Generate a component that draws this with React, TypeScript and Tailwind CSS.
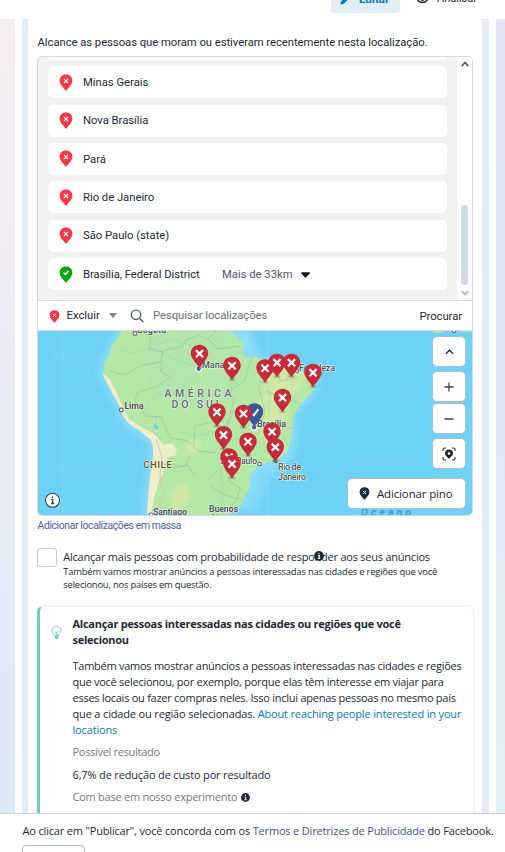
import React from "react";

const excluded = ["Minas Gerais", "Nova Brasília", "Pará", "Rio de Janeiro", "São Paulo (state)"];

const mapPins: [number, number][] = [
  [199.5, 353.5], [232, 365.5], [277, 362.5], [291.5, 362.5], [265, 368], [313, 372.5], [282.5, 397.5],
  [217, 412], [243.5, 413.5], [223.5, 434.8], [272, 431.5], [248, 441.5], [275.3, 447], [229, 457], [232, 463.8],
];

function Pin({ color, check, className }: { color: string; check?: boolean; className: string }) {
  return (
    <svg viewBox="0 0 14 17" className={className} aria-hidden="true">
      <path d="M7 .4C3.2.4.6 3 .6 6.500c0 4 4 7.200 5.500 9.500.5.700 1.300.700 1.800 0 1.500-2.300 5.500-5.500 5.500-9.500C13.400 3 10.800.4 7 .4Z" fill={color} />
      {check ? (
        <path d="m4.600 6.800 1.700 1.700 3.200-3.400" fill="none" stroke="#fff" strokeWidth="1.400" />
      ) : (
        <path d="m4.900 4.900 4.200 4.200m0-4.200L4.900 9.100" fill="none" stroke="#fff" strokeWidth="1.300" />
      )}
    </svg>
  );
}

function InfoDot({ className }: { className: string }) {
  return (
    <svg viewBox="0 0 10 10" className={className} aria-hidden="true">
      <circle cx="5" cy="5" r="4.900" fill="#1c2b33" />
      <path d="M5 2v1.300M4 4.600h1.200v2.600M3.900 7.400h2.300" stroke="#fff" strokeWidth="1.100" fill="none" />
    </svg>
  );
}

function MapMarker({ x, y, blue }: { x: number; y: number; blue?: boolean }) {
  return (
    <g transform={`translate(${x} ${y})`}>
      <ellipse cx="0" cy="14" rx="3.500" ry="1.500" fill="#35543a" opacity=".25" />
      <path d="M0-8.700c-5 0-8.700 3.700-8.700 8.500C-8.700 5-3.500 9 0 15 3.500 9 8.700 5 8.700-.2c0-4.800-3.700-8.500-8.700-8.500Z" fill={blue ? "#3b5998" : "#c92a37"} />
      {blue ? (
        <path d="m-1.500 2 1 1.200L4-3" stroke="#fff" strokeWidth="2" fill="none" />
      ) : (
        <path d="m-3.600-3.400 7.200 7.200m0-7.200-7.200 7.200" stroke="#fff" strokeWidth="2.200" fill="none" />
      )}
    </g>
  );
}

const land =
  "M121 331L118 338 111.700 345 109 355 104.500 362 103 375 108 385 115 398 120 407 124 417 128 423 140 431 151 440 153 446 153 458 150 478 148 498 147 516H228L232 510 243 503 245 495 250 488 250 475 257 467 266 463 276 460 284 456 288 450 291 440 293 425 294 415 300 405 311 394 315 386 314 378 306 373 298 370 288 364 277 363 264 360 256 357 248 358 243 355 244 345 237 337 230 331Z";

function MapArt() {
  return (
    <svg viewBox="38 331 434 184" className="block h-[184px] w-[434px]">
      <defs>
        <filter id="soft"><feGaussianBlur stdDeviation="3" /></filter>
        <filter id="tint"><feGaussianBlur stdDeviation="2" /></filter>
        <clipPath id="landClip"><path d={land} /></clipPath>
      </defs>
      <rect x="38" y="331" width="434" height="184" fill="#6ed1f6" />
      <path d={land} fill="none" stroke="#8adcf9" strokeWidth="8" filter="url(#soft)" />
      <path d="M230 331h20l10 24h-16Z" fill="#8fdffb" filter="url(#soft)" />
      <path d="M288 430q12 8 8 25l-25 22-15 35h-15l8-40Z" fill="#8fdffb" opacity=".6" filter="url(#soft)" />
      <g stroke="#86dbf8" strokeWidth="1" fill="none" opacity=".4">
        <path d="M50 352l9 7m-9-1 35 2M40 474l25-4 38 1M90 445l14-7 20-4M70 400l25-5M42 415l18 6M310 440l22 7M300 490l45-6M400 400l15-4M405 480l20 5M440 502l20 10" />
      </g>
      <path d="M62.500 331V515M267.500 331V515" stroke="#8bd8f5" strokeWidth=".7" />
      <path d="M431 331q8 4 14 0zM459 331q6 2 12 1v-1z" fill="#b9e5a2" />
      <path d={land} fill="#b5e8a5" />
      <g clipPath="url(#landClip)">
        <path d="M150 331h90v40l-30 40-50-15-20-30Z" fill="#b2e6aa" filter="url(#soft)" />
        <g filter="url(#tint)" fill="#cfe9a5">
          <path d="M262 372l30-7 15 9-10 18-18 6-18-8Z" />
          <path d="M260 396l22-2 7 15-10 25-18 6-9-20ZM189 440l10-1 0 10-8 7-5-7ZM174 489l13-5 4 13-13 13h-10Z" />
        </g>
        <path d="M102 373l8 6 7 15 7 15 5 10 13 8 14 8 7 10 9-2 5 7-2 6-8 1-2 12-6 12-5 17-3 17H146V440L130 427 116 407Z" fill="#f0edc9" />
        <path d="M156 439l6 18-2 20 3 17-7 21" stroke="#cdd1b4" strokeWidth="1.200" fill="none" />
        <g fill="none" stroke="#86d4d1" strokeWidth=".8" opacity=".6">
          <path d="M120 350l15 3 18-5 20 10 26 10 20-4 14-5 15-12M142 414l8-14 14-9 19-4 14-15M233 375l-2 17 3 18-8 20M267 355l-4 20 7 18-2 20M155 345l17-6 20 7M226 447l-5 23 2 30-10 15M180 430l15 7 20-5M245 433l-20 14M213 338l10 12" />
        </g>
        <g fill="none" stroke="#a3c8a8" strokeWidth=".8">
          <path d="M145 331l6 8-2 10 14 3-3 10-20 4-15 9-15-4M162 350l-1 22 10 5-15 10-18 5-3 9 11 15 15 1 9 21 18 3 10 10 20 2 9 8 1 20 12 7-3 12-14 13-10 17M157 417l-4 15 8 8M184 341l15-6 9 4 8-8M208 339l9 10 22-3M165 350l17-3 5-8M217 421l-22 5-1 19M208 479l9-8M190 454l-5 12-21-2M163 464l12 4 13-3 7 11M210 486l15 9 18 5M252 357l-8 25-21 12M264 361l-5 28 6 22-7 24M277 364l3 17 18-3M291 365l-4 15M266 391l17 8 18 4M258 418l17 9 17 1M235 397l-10 36M238 465l-13-4" />
        </g>
        <path d="M154 425l4 4" stroke="#6ccdf1" strokeWidth="2.500" fill="none" />
      </g>
      <g fill="#fff" stroke="#59616b" strokeWidth="1.100">
        <circle cx="135" cy="333.500" r="1.900" /><circle cx="121.300" cy="410" r="1.900" /><circle cx="151" cy="515" r="2" />
        <circle cx="297" cy="371" r="1.500" /><circle cx="259.500" cy="464" r="1.800" /><circle cx="275.500" cy="461" r="1.600" /><circle cx="454" cy="331" r="1.600" />
      </g>
      <g fontFamily="Roboto, sans-serif" fill="#505962" stroke="#e5f2df" strokeWidth="1.200" paintOrder="stroke" fontSize="9" fontWeight="500">
        <text x="137" y="332.500" textLength="29" fontWeight="700">Bogota</text>
        <text x="202" y="368" textLength="32">Manaus</text>
        <text x="124.500" y="409" textLength="19" fontWeight="700">Lima</text>
        <text x="299" y="370.500" textLength="36">Fortaleza</text>
        <text x="257" y="426.500" textLength="29" fontWeight="700">Brasília</text>
        <text x="220" y="463.500" textLength="37">São Paulo</text>
        <text x="278" y="470" textLength="23">Rio de</text>
        <text x="278" y="479.500" textLength="28">Janeiro</text>
        <text x="153" y="514.500" textLength="34" fontWeight="700">Santiago</text>
        <text x="209" y="511.500" textLength="29" fontWeight="700">Buenos</text>
        <text x="210" y="521" textLength="22" fontWeight="700">Aires</text>
        <text x="164.500" y="396.500" textLength="67" fontSize="10.500" fill="#626d78">AMÉRICA</text>
        <text x="171.500" y="408" textLength="50" fontSize="10.500" fill="#626d78">DO SUL</text>
        <text x="143.500" y="467.500" textLength="28" fill="#74462f">CHILE</text>
      </g>
      <text x="361" y="516" textLength="50" fontFamily="Roboto, sans-serif" fontSize="10" fontStyle="italic" fontWeight="700" fill="#27a5d5">Oceano</text>
      <g fill="#4669aa" stroke="#fff" strokeWidth="1.300"><circle cx="198.700" cy="369" r="2.800" /><circle cx="254" cy="427.500" r="2.800" /></g>
      <MapMarker x={254.500} y={412} blue />
      {mapPins.map(([x, y]) => <MapMarker key={`${x}-${y}`} x={x} y={y} />)}
      <g transform="translate(52.500 500.300)"><circle r="7" fill="#fff" stroke="#344854" strokeWidth="1.100" /><path d="M0-3.800v1.600M-1.300-.7H.2v3.600M-1.500 3.200h3.200" stroke="#344854" strokeWidth="1.300" fill="none" /></g>
    </svg>
  );
}

const mapButton = "flex w-[34px] items-center justify-center rounded-[5px] border border-[#aebdca] bg-white";

export default function App() {
  return (
    <div className="flex h-[852px] w-[505px] flex-col overflow-hidden bg-white font-[Roboto,sans-serif] text-[#1c2b33]">
      <header className="flex h-[19px] shrink-0 pl-[331px]">
        <div className="flex h-[13px] w-[69px] rounded-b-[4px] bg-[#e1edf7] pl-[9px] text-[#0a78be]">
          <svg viewBox="0 0 10 10" className="-mt-[5px] h-[10px] w-[10px] shrink-0"><path d="M.5 9.500 1 6.500 7 .5l2.500 2.500-6 6Z" fill="currentColor" /></svg>
          <span className="-mt-[8px] ml-[9px] text-[11.5px] leading-[14px] font-bold">Editar</span>
        </div>
        <div className="flex h-[8px] pl-[16px]">
          <svg viewBox="0 0 14 10" className="-mt-[6px] h-[10px] w-[13px]"><path d="M1 5c3-5 9-5 12 0-3 5-9 5-12 0Z" fill="none" stroke="#1c2b33" strokeWidth="1.500" /><circle cx="7" cy="5" r="2" /></svg>
          <span className="-mt-[8px] ml-[8px] text-[11px] leading-[14px]">Analisar</span>
        </div>
      </header>

      <main className="flex h-[794px] shrink-0 overflow-hidden">
        <div className="w-[15px] shrink-0 bg-linear-to-b from-[#f5eeef] via-[#e9e9f5] via-50% to-[#dcebf8]" />
        <div className="mx-[7px] flex w-[467px] shrink-0 bg-[#e1edf6] pr-[7px] pl-[6px]">
          <section className="w-[454px] rounded-t-[3px] bg-white pl-[9px]">
            <p className="h-[37px] pt-[15px] pl-[0.5px] text-[11.3px] leading-[17px] tracking-[-0.05px] whitespace-nowrap">Alcance as pessoas que moram ou estiveram recentemente nesta localização.</p>

            <div className="h-[460px] w-[436px] overflow-hidden rounded-[5px] border border-[#d5d8df]">
              <div className="flex h-[243px] bg-[#f1f1f1]">
                <div className="w-[419px] pl-[10px]">
                  <div className="h-[3px] w-[399px] rounded-b-[5px] bg-white" />
                  <div className="mt-[6.2px] flex flex-col gap-[6.4px]">
                    {excluded.map((name) => (
                      <div key={name} className="flex h-8 w-[399px] items-center rounded-[5px] bg-white pl-[11px] text-[11.3px]">
                        <Pin color="#fa3743" className="h-[17px] w-[14px]" />
                        <span className="ml-[10px] pt-[2.4px] tracking-[-0.03px]">{name}</span>
                      </div>
                    ))}
                    <div className="flex h-8 w-[399px] items-center rounded-[5px] bg-white pl-[11px] text-[11.3px]">
                      <Pin color="#06a60c" check className="h-[17px] w-[14px]" />
                      <span className="ml-[10px] w-[139px] pt-[3px] tracking-[-0.04px]">Brasília, Federal District</span>
                      <span className="w-[79px] pt-[3px] tracking-[-0.03px] text-[#465a69]">Mais de 33km</span>
                      <svg viewBox="0 0 10 6" className="mt-[1px] h-[6px] w-[9px]"><path d="M.5 0h9L10 1 5.500 5.700h-1L0 1Z" fill="#111820" /></svg>
                    </div>
                  </div>
                </div>
                <div className="flex w-[15px] flex-col items-center bg-white">
                  <svg viewBox="0 0 8 6" className="mt-[4px] h-[6px] w-[8px]"><path d="m.8 5 3.200-3.500L7.200 5" fill="none" stroke="#555" strokeWidth="1.800" /></svg>
                  <div className="mt-[138px] h-[80px] w-[7px] rounded-full bg-[#d0dce4]" />
                  <svg viewBox="0 0 8 6" className="mt-[5px] h-[6px] w-[8px]"><path d="m.8 1 3.200 3.500L7.200 1" fill="none" stroke="#b4b4b4" strokeWidth="1.800" /></svg>
                </div>
              </div>

              <div className="flex h-[31px] items-center border-y border-[#d8dae0] pr-[10px] pl-[11px] text-[11.3px]">
                <Pin color="#fa3743" className="mt-[2px] h-[13px] w-[11px]" />
                <span className="ml-[6px] w-[43px] pt-[1px] pl-[0.5px]">Excluir</span>
                <svg viewBox="0 0 8 5" className="h-[5px] w-[8px]"><path d="M.5 0h7v1L4 5 .5 1Z" fill="#7d8791" /></svg>
                <svg viewBox="0 0 14 14" className="ml-[13px] h-[14px] w-[14px]"><circle cx="6" cy="5.800" r="4.700" fill="none" stroke="#536069" strokeWidth="1.400" /><path d="m9.500 9.300 3.700 3.700" stroke="#536069" strokeWidth="1.500" /></svg>
                <span className="ml-[9px] pt-[1px] tracking-[-0.06px] text-[#65717b]">Pesquisar localizações</span>
                <span className="mt-[3px] ml-auto tracking-[-0.05px] text-[#1c2b33]">Procurar</span>
              </div>

              <div className="relative h-[184px] overflow-hidden rounded-b-[4px]">
                <MapArt />
                <div className="absolute top-[5px] right-[6px] flex flex-col items-end">
                  <button className={mapButton + " h-[31px]"}><svg viewBox="0 0 10 6" className="h-[6px] w-[9px]"><path d="m1 5 4-4 4 4" fill="none" stroke="#1c2b33" strokeWidth="1.500" /></svg></button>
                  <button className={mapButton + " mt-[4px] h-[31px]"}><svg viewBox="0 0 10 10" className="h-[10px] w-[10px]"><path d="M5 .5v9M.5 5h9" stroke="#354650" strokeWidth="1.300" /></svg></button>
                  <button className={mapButton + " mt-[1px] h-[31px]"}><svg viewBox="0 0 10 10" className="h-[10px] w-[10px]"><path d="M.5 5h9" stroke="#354650" strokeWidth="1.300" /></svg></button>
                  <button className={mapButton + " mt-[4px] h-[31px]"}><svg viewBox="0 0 14 14" className="h-[14px] w-[14px]"><path d="M1 4V2.500Q1 1 2.500 1H4M10 1h1.500Q13 1 13 2.500V4M13 10v1.500q0 1.500-1.500 1.500H10M4 13H2.500Q1 13 1 11.500V10" fill="none" stroke="#1c2b33" strokeWidth="1.100" /><path fillRule="evenodd" d="M7 2.500a4 4 0 0 0-4 4C3 9 6 10 7 12c1-2 4-3 4-5.500a4 4 0 0 0-4-4Zm0 2.700a1.300 1.300 0 1 1 0 2.600 1.300 1.300 0 0 1 0-2.600Z" fill="#1c2b33" /></svg></button>
                  <button className="mt-[9px] flex h-[31px] w-[119px] items-center rounded-[5px] border border-[#aebdca] bg-white pl-[11px] font-['Open_Sans',sans-serif] text-[11.5px] tracking-[-0.15px] whitespace-nowrap">
                    <Pin color="#1c2b33" className="h-[13px] w-[11px]" /><span className="ml-[7px]">Adicionar pino</span>
                  </button>
                </div>
              </div>
            </div>

            <p className="h-[31px] pt-[2px] pl-[0.5px] text-[10.4px] leading-[15px] tracking-[-0.37px] text-[#4a619e]">Adicionar localizações em massa</p>
            <div className="flex h-[59px] pt-[1px] font-['Open_Sans',sans-serif]">
              <div className="h-[19px] w-[20px] shrink-0 rounded-[3px] border border-[#c9ccd8]" />
              <div className="ml-[6px] pl-[0.3px] whitespace-nowrap">
                <div className="relative mt-[1px] text-[11px] leading-[15px] tracking-[-0.23px]">
                  <span>Alcançar mais pessoas com probabilidade de responder aos seus anúncios</span>
                  <InfoDot className="absolute top-[2px] left-[251px] h-[10px] w-[10px]" />
                </div>
                <p className="pt-[1px] text-[9.4px] leading-[13px] tracking-[-0.19px]">Também vamos mostrar anúncios a pessoas interessadas nas cidades e regiões que você<br />selecionou, nos países em questão.</p>
              </div>
            </div>

            <article className="flex h-[220px] w-[437px] rounded-tl-[6px] rounded-tr-[6px] border-t border-r border-l-3 border-t-[#efefef] border-r-[#efefef] border-l-[#70cbb9] pt-[9px] font-['Open_Sans',sans-serif] whitespace-nowrap shadow-[0_0_3px_rgba(0,0,0,0.08)]">
              <svg viewBox="0 0 12 14" className="mt-[10px] ml-[11px] h-[14px] w-[11px] shrink-0" fill="none" stroke="#70cdbb"><path d="M4 10C4 8 1 7 1 4.700a5 5 0 0 1 10 0C11 7 8 8 8 10Z" /><path d="m3.500 4.500 2 2 .5-1 .5 1 2-2M5.500 6.500V10M6.500 6.500V10" strokeWidth=".8" /><path d="M4 11h4M4.500 12.700h3" strokeWidth="1.600" /></svg>
              <div className="ml-[10px] pl-[0.5px] text-[11px] leading-4">
                <h2 className="font-bold tracking-[-0.27px]">Alcançar pessoas interessadas nas cidades ou regiões que você<br />selecionou</h2>
                <p className="mt-[10px] tracking-[-0.26px]">Também vamos mostrar anúncios a pessoas interessadas nas cidades e regiões<br />que você selecionou, por exemplo, porque elas têm interesse em viajar para<br />esses locais ou fazer compras neles. Isso inclui apenas pessoas no mesmo país<br /><span className="tracking-[-0.16px]">que a cidade ou região selecionadas. <span className="text-[#0a78be]">About reaching people interested in your<br />locations</span></span></p>
                <p className="mt-[6px] tracking-[-0.3px] text-[#727b82]">Possível resultado</p>
                <p className="mt-[7px] tracking-[-0.16px]">6,7% de redução de custo por resultado</p>
                <p className="mt-[6px] flex items-center tracking-[-0.25px] text-[#727b82]">Com base em nosso experimento <InfoDot className="ml-[4px] h-[9px] w-[9px]" /></p>
              </div>
            </article>
          </section>
        </div>
        <div className="w-[9px] grow bg-linear-to-b from-[#e5e5f4] via-[#e1eaf5] via-60% to-[#e0f1f4]" />
      </main>

      <footer className="h-[39px] shrink-0 border-t border-[#d1d3d5] bg-white pt-[9px] pl-[22px] font-['Open_Sans',sans-serif] text-[11px] leading-4 tracking-[-0.17px] whitespace-nowrap">
        <p className="pl-[0.5px]">Ao clicar em "Publicar", você concorda com os <span className="text-[#385898]">Termos e Diretrizes de Publicidade</span> do Facebook.</p>
        <button className="mt-[6px] block h-[30px] w-[63px] rounded-[4px] border border-[#aeb9c5]" />
      </footer>
    </div>
  );
}
